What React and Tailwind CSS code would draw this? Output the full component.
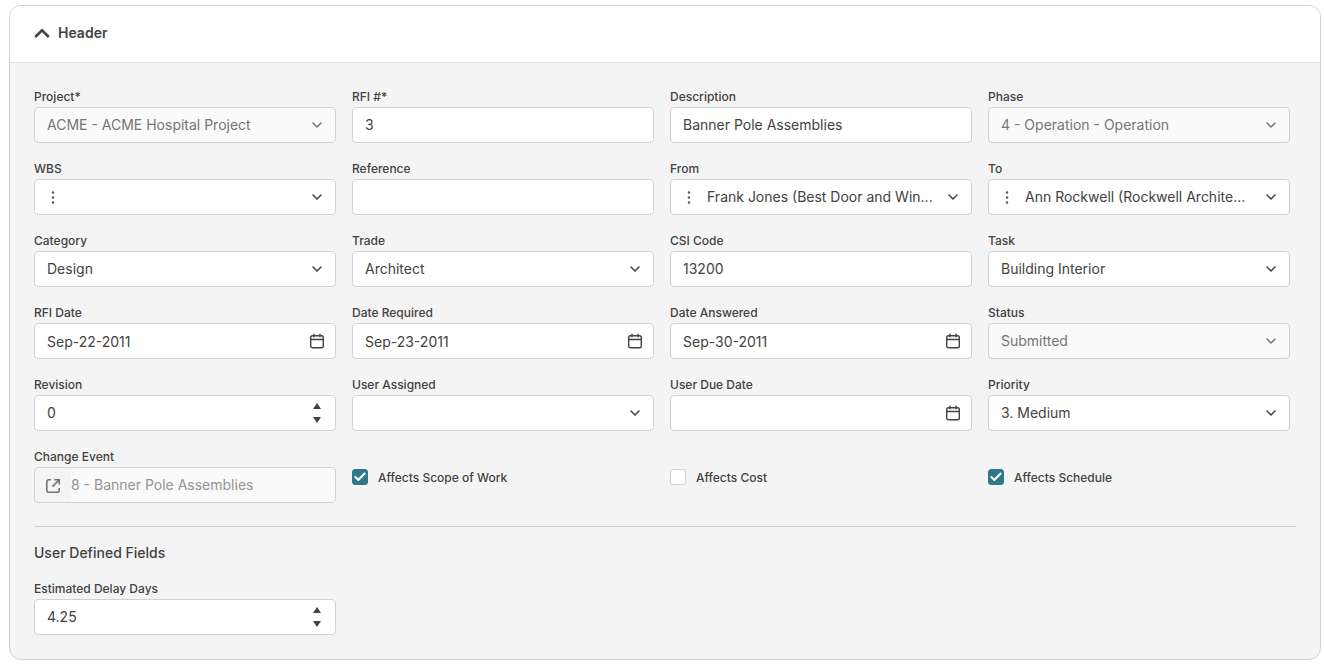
// RfiHeaderPage.jsx
import { useState } from 'react';
import { Check, ChevronDown } from 'lucide-react';

const boxClass = "h-9 w-full rounded border border-[#d1d1d1] bg-white px-3 text-sm text-[#424242] disabled:bg-[#fafafa] disabled:text-[#757575] disabled:opacity-100";

const Field = ({ id, label, children }) => (
  <div className="min-w-0">
    <label htmlFor={id} className="block text-xs leading-5 font-medium text-[#424242]">{label}</label>
    {children}
  </div>
);

const TextField = ({ id, label, value = "" }) => (
  <Field id={id} label={label}>
    <input id={id} type="text" defaultValue={value} className={`${boxClass} pb-0.5`} />
  </Field>
);

const Dots = () => (
  <svg viewBox="0 0 4 14" className="h-3.5 w-1" fill="#555555">
    <circle cx="2" cy="2.5" r="1.2" />
    <circle cx="2" cy="7.5" r="1.2" />
    <circle cx="2" cy="12.5" r="1.2" />
  </svg>
);

const SelectField = ({ id, label, value = "", disabled = false, menu = false }) => (
  <Field id={id} label={label}>
    <div className="relative">
      <select
        id={id}
        disabled={disabled}
        defaultValue={value}
        className={`${boxClass} appearance-none truncate ${menu ? "pl-9" : ""}`}
      >
        <option value={value}>{value}</option>
      </select>
      {menu && (
        <button type="button" aria-label={`${label} menu`} className="absolute inset-y-0 left-3 flex w-3.5 items-center justify-center">
          <Dots />
        </button>
      )}
      <ChevronDown
        strokeWidth={2.3}
        className={`pointer-events-none absolute top-2.5 right-[11px] h-4 w-4 ${disabled ? "text-[#757575]" : "text-[#424242]"}`}
      />
    </div>
  </Field>
);

const DateField = ({ id, label, value = "" }) => (
  <Field id={id} label={label}>
    <div className="relative">
      <input id={id} type="text" defaultValue={value} className={`${boxClass} pr-9`} />
      <button type="button" aria-label={`${label} calendar`} className="absolute inset-y-0 right-3 flex items-center">
        <svg viewBox="0 0 14 16" className="h-4 w-3.5" fill="none" stroke="#424242" strokeWidth="1.4">
          <rect x="0.7" y="2.7" width="12.6" height="12" rx="1.8" />
          <path d="M0.7 6.5h12.6M4 0.8v3.4M10 0.8v3.4" />
        </svg>
      </button>
    </div>
  </Field>
);

const NumberField = ({ id, label, value, step = 1 }) => {
  const [number, setNumber] = useState(value);

  return (
    <Field id={id} label={label}>
      <div className="relative">
        <input
          id={id}
          type="text"
          inputMode="decimal"
          value={number}
          onChange={(e) => setNumber(e.target.value)}
          className={`${boxClass} pr-9 pb-0.5`}
        />
        <div className="absolute inset-y-0 right-3 flex w-3.5 flex-col items-center justify-center gap-2">
          <button type="button" aria-label={`Increase ${label}`} onClick={() => setNumber(Number(number) + step)}>
            <svg viewBox="0 0 8 6" className="block h-1.5 w-2" fill="#424242"><path d="M4 0l4 6H0z" /></svg>
          </button>
          <button type="button" aria-label={`Decrease ${label}`} onClick={() => setNumber(Number(number) - step)}>
            <svg viewBox="0 0 8 6" className="block h-1.5 w-2" fill="#424242"><path d="M4 6L0 0h8z" /></svg>
          </button>
        </div>
      </div>
    </Field>
  );
};

const CheckField = ({ label, checked = false }) => (
  <label className="mt-1 flex h-4 items-center gap-2.5 self-center text-xs font-medium text-[#424242]">
    <span className="grid">
      <input
        type="checkbox"
        defaultChecked={checked}
        className="peer col-start-1 row-start-1 h-4 w-4 appearance-none rounded-[3px] border border-[#d1d1d1] bg-white checked:border-[#2f788c] checked:bg-[#2f788c]"
      />
      <Check strokeWidth={3.5} className="pointer-events-none invisible col-start-1 row-start-1 h-3.5 w-3.5 place-self-center text-white peer-checked:visible" />
    </span>
    <span className="pt-0.5">{label}</span>
  </label>
);

const ChangeEventField = () => (
  <Field id="changeEvent" label="Change Event">
    <div className="flex h-9 overflow-hidden rounded border border-[#d1d1d1]">
      <button type="button" aria-label="Open change event" className="flex w-9 shrink-0 items-center justify-center pt-0.5">
        <svg viewBox="0 0 14 14" className="h-3.5 w-3.5" fill="none" stroke="#757575" strokeWidth="1.6">
          <path d="M5 0.8H2.8a2 2 0 0 0-2 2v8.4a2 2 0 0 0 2 2h8.4a2 2 0 0 0 2-2V9" />
          <path d="M8.4 0.8h4.8v4.8M13 1L6.4 7.6" />
        </svg>
      </button>
      <input
        id="changeEvent"
        type="text"
        disabled
        defaultValue="8 - Banner Pole Assemblies"
        className="min-w-0 flex-1 rounded bg-[#fafafa] text-sm text-[#949494]"
      />
    </div>
  </Field>
);

const App = () => {
  const [open, setOpen] = useState(true);

  return (
    <div className="pt-[5px] pr-[3px] pb-1 pl-[9px] font-['Inter',sans-serif] text-[#424242]">
      <section className="overflow-hidden rounded-xl border border-[#d1d1d1] bg-[#f4f4f4]">
        <header className="border-b border-[#e0e0e0] bg-white px-6">
          <button
            type="button"
            aria-expanded={open}
            onClick={() => setOpen(!open)}
            className="flex h-14 items-center gap-2 pb-0.5 text-sm font-semibold"
          >
            <svg viewBox="0 0 16 10" className="h-2.5 w-4" fill="none" stroke="#424242" strokeWidth="2.6">
              <path d="M1.2 9l6.8-6.6L14.8 9" />
            </svg>
            Header
          </button>
        </header>

        {open && (
          <div className="p-6">
            <div className="grid grid-cols-4 gap-4 pr-1.5">
              <SelectField id="project" label="Project*" value="ACME - ACME Hospital Project" disabled />
              <TextField id="rfiNumber" label="RFI #*" value="3" />
              <TextField id="description" label="Description" value="Banner Pole Assemblies" />
              <SelectField id="phase" label="Phase" value="4 - Operation - Operation" disabled />

              <SelectField id="wbs" label="WBS" menu />
              <TextField id="reference" label="Reference" />
              <SelectField id="from" label="From" value="Frank Jones (Best Door and Win..." menu />
              <SelectField id="to" label="To" value="Ann Rockwell (Rockwell Archite..." menu />

              <SelectField id="category" label="Category" value="Design" />
              <SelectField id="trade" label="Trade" value="Architect" />
              <TextField id="csiCode" label="CSI Code" value="13200" />
              <SelectField id="task" label="Task" value="Building Interior" />

              <DateField id="rfiDate" label="RFI Date" value="Sep-22-2011" />
              <DateField id="dateRequired" label="Date Required" value="Sep-23-2011" />
              <DateField id="dateAnswered" label="Date Answered" value="Sep-30-2011" />
              <SelectField id="status" label="Status" value="Submitted" disabled />

              <NumberField id="revision" label="Revision" value="0" />
              <SelectField id="userAssigned" label="User Assigned" />
              <DateField id="userDueDate" label="User Due Date" />
              <SelectField id="priority" label="Priority" value="3. Medium" />

              <ChangeEventField />
              <CheckField label="Affects Scope of Work" checked />
              <CheckField label="Affects Cost" />
              <CheckField label="Affects Schedule" checked />
            </div>

            <hr className="mt-[23px] mb-4 border-[#cccccc]" />

            {/* User defined fields */}
            <h2 className="mb-4 text-sm font-medium">User Defined Fields</h2>
            <div className="grid grid-cols-4 gap-4 pr-1.5">
              <NumberField id="delayDays" label="Estimated Delay Days" value="4.25" />
            </div>
          </div>
        )}
      </section>
    </div>
  );
};

export default App;
